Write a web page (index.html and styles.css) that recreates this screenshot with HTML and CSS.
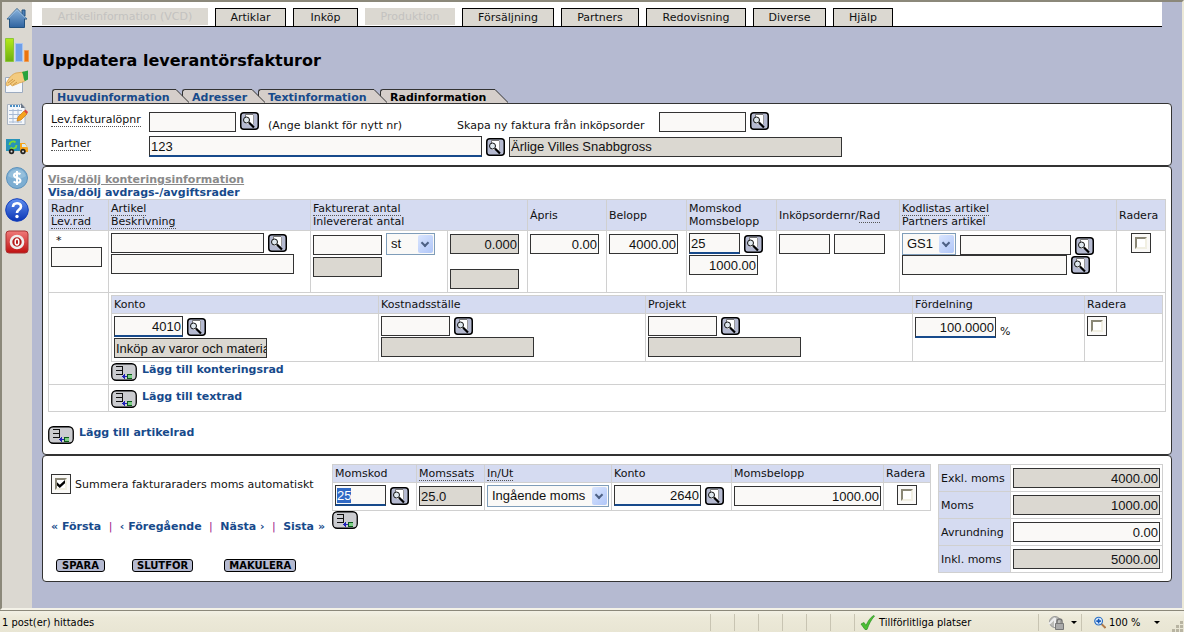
FILE: index.html
```html
<!DOCTYPE html>
<html lang="sv">
<head>
<meta charset="utf-8">
<title>Uppdatera leverantörsfakturor</title>
<link rel="stylesheet" href="styles.css">
</head>
<body>
<svg class="defs" aria-hidden="true">
  <defs>
    <linearGradient id="gBlue" x1="0" y1="0" x2="0" y2="1"><stop offset="0" stop-color="#8ab4dd"/><stop offset="1" stop-color="#2f639f"/></linearGradient>
    <linearGradient id="gGreen" x1="0" y1="0" x2="0" y2="1"><stop offset="0" stop-color="#b4ea1c"/><stop offset="1" stop-color="#6fae10"/></linearGradient>
    <linearGradient id="gHelp" x1="0" y1="0" x2="0" y2="1"><stop offset="0" stop-color="#5f8ff0"/><stop offset="1" stop-color="#0b35b4"/></linearGradient>
    <linearGradient id="gRed" x1="0" y1="0" x2="0" y2="1"><stop offset="0" stop-color="#ef7a7a"/><stop offset="1" stop-color="#c01010"/></linearGradient>
    <symbol id="search" viewBox="0 0 19 18">
      <rect x=".75" y=".75" width="17.5" height="16.5" rx="3" fill="#b5bad1" stroke="#000" stroke-width="1.5"/>
      <path d="M6 3h7v9H6z" fill="#fff"/><path d="M5.500 5V2.500H13" fill="none" stroke="#777"/><path d="M13.500 3v9" stroke="#999"/>
      <circle cx="6.500" cy="8" r="3" fill="#dfe8ee" stroke="#111"/>
      <path d="M9 10.500l5 5" stroke="#000" stroke-width="2.200"/>
    </symbol>
    <symbol id="add" viewBox="0 0 26 18">
      <rect x=".75" y=".75" width="24.500" height="16.500" rx="4.500" fill="#cbccd0" stroke="#000" stroke-width="1.300"/>
      <path d="M5 3h7v9H5v-1h6V8H5V7h6V4H5z" fill="#111"/>
      <path d="M12 13h4v1h-4zM11 13h1v1h-1zM12 12h1v3h-1zM13 11h1v5h-1z" fill="#2020b8"/>
      <path d="M17 12h4v3h-4z" fill="#7fd088"/><path d="M16 11h5v1h-4v3h4v1h-5z" fill="#0c5a18"/>
    </symbol>
    <symbol id="slant" viewBox="0 0 15 14"><path d="M0 .5h2L15 13.500V14H0z" fill="#d5ceca"/><path d="M0 .5h2L15.500 14" fill="none" stroke="#333"/></symbol>
  </defs>
</svg>

<div class="window">
  <nav class="sidebar" aria-label="Genvägar">
    <a href="#" aria-label="Hem"><svg viewBox="0 0 24 24"><path d="M17 4h3v6h-3z" fill="#4d7fb8" stroke="#23527f"/><path d="M2 13L12 2.500 22 13h-2.500v8.500h-15V13z" fill="url(#gBlue)" stroke="#23527f"/><path d="M3 12.500L12 3.500l9 9" fill="none" stroke="#a9c9e8"/></svg></a>
    <a href="#" aria-label="Statistik"><svg viewBox="0 0 24 24"><path d="M.5.500h8v23h-8z" fill="url(#gGreen)" stroke="#8cc63a"/><path d="M10.500 5.500h7v18h-7z" fill="#6f9fe8" stroke="#a8c5f2"/><path d="M19.500 12.500h4v11h-4z" fill="#ea7410" stroke="#f09a50"/></svg></a>
    <a href="#" aria-label="Avtal"><svg viewBox="0 0 24 24"><path d="M.5 7.500h17v15H.5z" fill="#f5f8fc" stroke="#9cabc0"/><path d="M1 14c2-5 6-10 10-11l8-1 2 8c-3 3-6 2-9 4l-5 2-1-2-4 2z" fill="#f3cb80" stroke="#d9a24a" stroke-width=".8"/><path d="M3 13l5-4M5 14l5-4M8 15l4-3" stroke="#c48b3a" stroke-width=".8"/><path d="M17 2l6-1.500v9L20 11c-2-2-1-5-3-9z" fill="#27a33c"/></svg></a>
    <a href="#" aria-label="Formulär"><svg viewBox="0 0 24 24"><path d="M2.500 2.500H17l3 3v17H2.500z" fill="#f4f7fb" stroke="#a9b3c0"/><path d="M16 1l4 5h-4z" fill="#6c7888"/><path d="M5 4h10" stroke="#4b8ec2" stroke-width="2" stroke-dasharray="2 1"/><path d="M4 8.500h13M4 12.500h13M4 16.500h13M4 20h13M8 7v14M13 7v14" stroke="#a7bad4"/><path d="M12 19l1-4 6-6 3 3-6 6z" fill="#f5a21e" stroke="#c87a12" stroke-width=".7"/><path d="M19 9l1.500-1.500 2.500 2.500-1 2z" fill="#e0473d"/></svg></a>
    <a href="#" aria-label="Leverans"><svg viewBox="0 0 24 24"><path d="M1 5h14v12H1z" fill="#2793b8"/><path d="M15 9h5l3 5v4h-8z" fill="#f6a51d"/><path d="M17 10h3l2 3h-5z" fill="#d5eaf5"/><path d="M4.500 11a3.500 3.500 0 0 1 6-2.500M11.500 11a3.500 3.500 0 0 1-6 2.500" fill="none" stroke="#7ddb34" stroke-width="1.800"/><circle cx="6.500" cy="17.500" r="2.700" fill="#222"/><circle cx="6.500" cy="17.500" r="1" fill="#ddd"/><circle cx="18" cy="17.500" r="2.700" fill="#222"/><circle cx="18" cy="17.500" r="1" fill="#ddd"/></svg></a>
    <a href="#" aria-label="Valuta"><svg viewBox="0 0 24 24"><circle cx="12" cy="12" r="10.500" fill="#7daed2" stroke="#5d93bd"/><path d="M3 10a9.500 9.500 0 0 1 18 0c-4 3-12 4-18 0z" fill="#a5c9e2" opacity=".6"/><path d="M15.500 8.200C13 6.500 9 7 9 9.500c0 3.200 6.500 1.500 6.500 5 0 2.500-4.500 3-7 1M12 5v14" fill="none" stroke="#fff" stroke-width="2"/></svg></a>
    <a href="#" aria-label="Hjälp"><svg viewBox="0 0 24 24"><circle cx="12" cy="12" r="11.300" fill="url(#gHelp)" stroke="#143fbb"/><path d="M8 9c0-5 8-5 8-.5 0 3-4 3-4 6.500" fill="none" stroke="#fff" stroke-width="2.600"/><circle cx="12" cy="18.500" r="1.700" fill="#fff"/></svg></a>
    <a href="#" aria-label="Avsluta"><svg viewBox="0 0 24 24"><rect x="1" y="1" width="22" height="22" rx="3" fill="url(#gRed)" stroke="#a83434"/><circle cx="12" cy="12" r="6" fill="#b51a1a" stroke="#eee" stroke-width="2.600"/><ellipse cx="12" cy="12" rx="1.800" ry="3" fill="none" stroke="#fff" stroke-width="1.500"/></svg></a>
  </nav>

  <main class="main">
    <nav class="menu" aria-label="Huvudmeny">
      <button class="menu-btn w-info" disabled>Artikelinformation (VCD)</button>
      <button class="menu-btn w-art">Artiklar</button>
      <button class="menu-btn w-ink">Inköp</button>
      <button class="menu-btn w-prod" disabled>Produktion</button>
      <button class="menu-btn w-fors">Försäljning</button>
      <button class="menu-btn w-part">Partners</button>
      <button class="menu-btn w-redo">Redovisning</button>
      <button class="menu-btn w-div">Diverse</button>
      <button class="menu-btn w-help">Hjälp</button>
    </nav>

    <div class="content">
      <h1>Uppdatera leverantörsfakturor</h1>
      <div class="tabs">
        <a class="tab t1" href="#">Huvudinformation<svg><use href="#slant"/></svg></a>
        <a class="tab t2" href="#">Adresser<svg><use href="#slant"/></svg></a>
        <a class="tab t3" href="#">Textinformation<svg><use href="#slant"/></svg></a>
        <a class="tab t4 current" href="#">Radinformation<svg><use href="#slant"/></svg></a>
      </div>

      <section class="panel head">
        <label class="lead" for="lopnr"><span class="tip">Lev.fakturalöpnr</span></label>
        <div class="line">
          <input class="field w87" id="lopnr" type="text">
          <button class="icon" aria-label="Sök faktura"><svg><use href="#search"/></svg></button>
          <span class="hint">(Ange blankt för nytt nr)</span>
          <label class="order" for="order">Skapa ny faktura från inköpsorder</label>
          <input class="field w87" id="order" type="text">
          <button class="icon" aria-label="Sök inköpsorder"><svg><use href="#search"/></svg></button>
        </div>
        <label class="lead" for="partner"><span class="tip">Partner</span></label>
        <div class="line mid">
          <input class="field req w333" id="partner" type="text" value="123">
          <button class="icon" aria-label="Sök partner"><svg><use href="#search"/></svg></button>
          <input class="field ro w333" aria-label="Partnernamn" readonly value="Ärlige Villes Snabbgross">
        </div>
      </section>

      <section class="panel rows">
        <a class="toggle off" href="#">Visa/dölj konteringsinformation</a>
        <a class="toggle" href="#">Visa/dölj avdrags-/avgiftsrader</a>
        <table class="grid items">
          <colgroup><col class="c-60"><col><col class="c-137"><col class="c-80"><col class="c-79"><col class="c-80"><col class="c-90"><col class="c-123"><col class="c-217"><col class="c-49"></colgroup>
          <thead><tr>
            <th><span class="tip">Radnr</span><br><span class="tip">Lev.rad</span></th>
            <th><span class="tip">Artikel</span><br><span class="tip">Beskrivning</span></th>
            <th colspan="2"><span class="tip">Fakturerat antal</span><br>Inlevererat antal</th>
            <th>Ápris</th><th>Belopp</th><th>Momskod<br>Momsbelopp</th>
            <th>Inköpsordernr/<span class="tip">Rad</span></th>
            <th><span class="tip">Kodlistas artikel</span><br>Partners artikel</th>
            <th>Radera</th>
          </tr></thead>
          <tbody>
          <tr class="item">
            <td><div class="star">*</div><input class="field w51" aria-label="Lev.rad"></td>
            <td><div class="stack">
              <div class="line mid"><input class="field w153" aria-label="Artikel"><button class="icon" aria-label="Sök artikel"><svg><use href="#search"/></svg></button></div>
              <input class="field w183" aria-label="Beskrivning"></div></td>
            <td><div class="stack gap2">
              <div class="line end"><input class="field w69" aria-label="Fakturerat antal"><span class="pick"><select class="s49" aria-label="Enhet"><option>st</option></select></span></div>
              <input class="field ro w69" aria-label="Inlevererat antal" readonly></div></td>
            <td class="low"><div class="stack gap15"><input class="field ro num w69" aria-label="Antal" readonly value="0.000"><input class="field ro w69" aria-label="Antal levererat" readonly></div></td>
            <td class="low"><input class="field num w69" aria-label="Ápris" value="0.00"></td>
            <td class="low"><input class="field num w69" aria-label="Belopp" value="4000.00"></td>
            <td><div class="stack">
              <div class="line mid"><input class="field req w51" aria-label="Momskod" value="25"><button class="icon" aria-label="Sök momskod"><svg><use href="#search"/></svg></button></div>
              <input class="field num w69" aria-label="Momsbelopp" value="1000.00"></div></td>
            <td class="low"><div class="line"><input class="field w51" aria-label="Inköpsordernr"><input class="field w51" aria-label="Rad"></div></td>
            <td><div class="stack flush">
              <div class="line end"><span class="pick"><select class="s54" aria-label="Kodlista"><option>GS1</option></select></span><input class="field w111" aria-label="Kodlistas artikel"><button class="icon" aria-label="Sök kod"><svg><use href="#search"/></svg></button></div>
              <div class="line mid"><input class="field w165" aria-label="Partners artikel"><button class="icon" aria-label="Sök partnerartikel"><svg><use href="#search"/></svg></button></div></div></td>
            <td class="center"><input class="check" type="checkbox" aria-label="Radera rad"></td>
          </tr>
          <tr>
            <td></td>
            <td colspan="9">
              <table class="grid accounts">
                <colgroup><col><col class="c-267"><col class="c-267"><col class="c-172"><col class="c-78"></colgroup>
                <thead><tr><th>Konto</th><th>Kostnadsställe</th><th>Projekt</th><th>Fördelning</th><th>Radera</th></tr></thead>
                <tbody><tr>
                  <td><div class="stack"><div class="line mid"><input class="field req num w69" aria-label="Konto" value="4010"><button class="icon" aria-label="Sök konto"><svg><use href="#search"/></svg></button></div><input class="field ro w153" aria-label="Kontonamn" readonly value="Inköp av varor och materia"></div></td>
                  <td><div class="stack"><div class="line mid"><input class="field w69" aria-label="Kostnadsställe"><button class="icon" aria-label="Sök kostnadsställe"><svg><use href="#search"/></svg></button></div><input class="field ro w153" aria-label="Kostnadsställets namn" readonly></div></td>
                  <td><div class="stack"><div class="line mid"><input class="field w69" aria-label="Projekt"><button class="icon" aria-label="Sök projekt"><svg><use href="#search"/></svg></button></div><input class="field ro w153" aria-label="Projektnamn" readonly></div></td>
                  <td class="low"><div class="line end"><input class="field req num w81" aria-label="Fördelning" value="100.0000"><span>%</span></div></td>
                  <td><input class="check" type="checkbox" aria-label="Radera kontering"></td>
                </tr></tbody>
              </table>
              <button class="add"><svg><use href="#add"/></svg>Lägg till konteringsrad</button>
            </td>
          </tr>
          <tr>
            <td></td>
            <td colspan="9" class="textrow"><button class="add"><svg><use href="#add"/></svg>Lägg till textrad</button></td>
          </tr>
          </tbody>
        </table>
        <button class="add article"><svg><use href="#add"/></svg>Lägg till artikelrad</button>
      </section>

      <section class="panel foot">
        <div class="actions">
          <label class="sum"><input class="check" type="checkbox" checked><span>Summera fakturaraders moms automatiskt</span></label>
          <div class="pager"><a href="#">« Första</a> | <a href="#">‹ Föregående</a> | <a href="#">Nästa ›</a> | <a href="#">Sista »</a></div>
          <div class="buttons"><button class="cmd">SPARA</button><button class="cmd">SLUTFÖR</button><button class="cmd last">MAKULERA</button></div>
        </div>
        <div class="tax">
          <table class="grid vat">
            <colgroup><col class="c-84"><col class="c-68"><col class="c-127"><col class="c-120"><col class="c-152"><col class="c-47"></colgroup>
            <thead><tr><th>Momskod</th><th><span class="tip">Momssats</span></th><th><span class="tip">In/Ut</span></th><th>Konto</th><th>Momsbelopp</th><th>Radera</th></tr></thead>
            <tbody><tr>
              <td><div class="line mid"><input class="field req w51" id="vatcode" aria-label="Momskod" value="25"><button class="icon" aria-label="Sök momskod"><svg><use href="#search"/></svg></button></div></td>
              <td class="low"><input class="field ro w63" aria-label="Momssats" readonly value="25.0"></td>
              <td><span class="pick"><select class="s122" aria-label="In/Ut"><option>Ingående moms</option></select></span></td>
              <td><div class="line mid"><input class="field req num w87" aria-label="Konto" value="2640"><button class="icon" aria-label="Sök konto"><svg><use href="#search"/></svg></button></div></td>
              <td class="low"><input class="field num w147" aria-label="Momsbelopp" value="1000.00"></td>
              <td class="center"><input class="check" type="checkbox" aria-label="Radera moms"></td>
            </tr></tbody>
          </table>
          <button class="add" aria-label="Lägg till momsrad"><svg><use href="#add"/></svg></button>
        </div>
        <table class="grid totals">
          <tbody>
          <tr><th><label for="t1">Exkl. moms</label></th><td><input class="field ro num" id="t1" readonly value="4000.00"></td></tr>
          <tr><th><label for="t2">Moms</label></th><td><input class="field ro num" id="t2" readonly value="1000.00"></td></tr>
          <tr><th><label for="t3">Avrundning</label></th><td><input class="field num" id="t3" value="0.00"></td></tr>
          <tr><th><label for="t4">Inkl. moms</label></th><td><input class="field ro num" id="t4" readonly value="5000.00"></td></tr>
          </tbody>
        </table>
      </section>
    </div>
  </main>
</div>

<footer class="status">
  <span class="msg">1 post(er) hittades</span>
  <i></i><i></i><i></i><i></i><i></i><i></i>
  <span class="zone"><svg viewBox="0 0 15 15"><path d="M1 9l3-1.500 2 3C8 6 10 3 13.500.500L14.500 1C11 5 9 9 7 14.500H5z" fill="#4cc034" stroke="#2c8f24" stroke-width=".7"/></svg>Tillförlitliga platser</span>
  <span class="lock"><svg viewBox="0 0 17 15"><circle cx="7" cy="7" r="5.500" fill="#bcbcb8" stroke="#999"/><path d="M1 9l6-6M7 3v9" stroke="#eee" stroke-width="2"/><path d="M9 8V6.500a2.500 2.500 0 0 1 5 0V8" fill="none" stroke="#777" stroke-width="1.500"/><path d="M7.500 8.500h8v6h-8z" fill="#aaa" stroke="#777"/></svg><b class="caret"></b></span>
  <span class="zoom"><svg viewBox="0 0 13 13"><path d="M8 8l4.500 4.500" stroke="#b07a4a" stroke-width="2.200"/><circle cx="5" cy="5" r="4.200" fill="#e4f1fd" stroke="#2b6fc4" stroke-width="1.300"/><path d="M2.500 5h5M5 2.500v5" stroke="#1558b8" stroke-width="1.700"/></svg>100 %<b class="caret"></b></span>
  <svg class="grip" viewBox="0 0 12 12"><path d="M8 0h3v3H8zM8 4h3v3H8zM8 8h3v3H8zM4 4h3v3H4zM4 8h3v3H4zM0 8h3v3H0z" fill="#b8b4a2"/></svg>
</footer>
<script src="app.js"></script>
</body>
</html>
```
FILE: app.js
```js
const code = document.getElementById('vatcode');
code.focus();
code.select();
```
FILE: styles.css
```css
* { box-sizing: border-box; }
body {
  margin: 0;
  min-height: 100vh;
  display: flex;
  flex-direction: column;
  background: #b5bad1;
  color: #111;
  font: 11px/13px "DejaVu Sans", Verdana, sans-serif;
}
a { color: #174a8b; text-decoration: none; }
button, input, select { font: inherit; color: inherit; margin: 0; }
button { padding: 0; border: 0; background: none; cursor: pointer; }
::selection { background: #316ac5; color: #fff; }
.defs { position: absolute; width: 0; height: 0; }

.window {
  flex: 1;
  display: flex;
  border-style: solid;
  border-width: 2px;
  border-color: #8b887a #ece9d8 #f4f2e8 #8b887a;
}
.sidebar {
  width: 30px;
  flex: none;
  display: flex;
  flex-direction: column;
  align-items: center;
  gap: 8px;
  padding-top: 4px;
  background: #dbd8d1;
}
.sidebar a, .sidebar svg { display: block; width: 24px; height: 24px; }
.main { flex: 1; min-width: 0; }

.menu {
  display: flex;
  align-items: flex-end;
  gap: 7px;
  height: 25px;
  margin-right: 20px;
  padding-left: 10px;
  background: #fff;
  border-bottom: 1px solid #000;
}
.menu-btn {
  height: 18px;
  background: #dbd8d1;
  border: 1px solid #000;
  border-bottom: 0;
  white-space: nowrap;
}
.menu-btn:disabled { height: 17px; margin-bottom: 1px; border: 0; color: #c3c2c0; }
.w-info { width: 166px; }
.w-art { width: 71px; }
.w-ink { width: 65px; }
.w-prod { width: 90px; }
.w-fors { width: 92px; }
.w-part { width: 78px; }
.w-redo { width: 100px; }
.w-div { width: 73px; }
.w-help { width: 60px; }

.content { padding: 24px 10px 26px; }
h1 { margin: 0 0 18px; font-size: 16px; line-height: 20px; color: #000; }

.tabs { display: flex; padding-left: 10px; }
.tab {
  position: relative;
  height: 14px;
  margin-right: 8px;
  padding-left: 9px;
  background: #d5ceca;
  border-top: 1px solid #333;
  border-left: 1px solid #333;
  border-radius: 3px 0 0 0;
  font-weight: bold;
  line-height: 15px;
}
.tab svg { position: absolute; top: -1px; left: 100%; width: 15px; height: 14px; }
.t1 { z-index: 4; min-width: 122px; padding-left: 4px; }
.t2 { z-index: 3; min-width: 68px; }
.t3 { z-index: 2; min-width: 114px; }
.t4 { z-index: 1; min-width: 113px; }
.current { color: #000; }

.panel { background: #fff; border: 1px solid #333; border-radius: 4px; }
.tip { border-bottom: 1px dotted #555; }
.line { display: flex; align-items: flex-start; gap: 4px; }
.mid { align-items: center; }
.end { align-items: flex-end; }
.stack { display: flex; flex-direction: column; align-items: flex-start; gap: 1px; }
.gap2 { gap: 2px; }
.gap15 { gap: 15px; }
.flush { gap: 0; }

.field {
  display: block;
  height: 20px;
  min-width: 0;
  padding: 0 0 0 1px;
  border: 1px solid #333;
  border-radius: 0;
  outline: 0;
  background: #faf9f7;
  font: 13px/16px "Liberation Sans", Arial, sans-serif;
}
.req { height: 21px; border-bottom: 2px solid #174a8b; }
.ro { background: #dbd8d1; }
.num { text-align: right; padding-right: 1px; }
.w51 { width: 51px; }
.w63 { width: 63px; }
.w69 { width: 69px; }
.w81 { width: 81px; }
.w87 { width: 87px; }
.w111 { width: 111px; }
.w147 { width: 147px; }
.w153 { width: 153px; }
.w165 { width: 165px; }
.w183 { width: 183px; }
.w333 { width: 333px; }

.icon, .icon svg { display: block; width: 19px; height: 18px; flex: none; }

.pick { position: relative; display: block; flex: none; }
.pick select {
  display: block;
  appearance: none;
  height: 22px;
  padding: 0 4px;
  border: 1px solid #7f9db9;
  border-radius: 0;
  background: #faf9f7;
  font: 13px/16px "Liberation Sans", Arial, sans-serif;
}
.pick::before {
  content: "";
  position: absolute;
  z-index: 1;
  top: 2px;
  right: 2px;
  width: 15px;
  height: 18px;
  border-radius: 2px;
  background: linear-gradient(135deg, #d9e5fe, #b0c6f8);
  pointer-events: none;
}
.pick::after {
  content: "";
  position: absolute;
  z-index: 2;
  top: 7px;
  right: 7px;
  width: 4px;
  height: 4px;
  border: solid #4d6185;
  border-width: 0 2px 2px 0;
  transform: rotate(45deg);
  pointer-events: none;
}
.pick .s49 { width: 49px; }
.pick .s54 { width: 54px; }
.pick .s122 { width: 122px; }

.check {
  display: grid;
  place-items: center;
  appearance: none;
  flex: none;
  width: 20px;
  height: 20px;
  border: 1px solid #333;
  background: #faf9f7;
}
.check::before {
  content: "";
  box-sizing: border-box;
  grid-area: 1 / 1;
  width: 12px;
  height: 12px;
  border: 2px solid #f1efe2;
  border-top-color: #8a8776;
  border-left-color: #8a8776;
  background: #fff;
}
.check:checked::after {
  content: "";
  grid-area: 1 / 1;
  width: 8px;
  height: 8px;
  background: #000;
  clip-path: polygon(0 29%, 35% 60%, 100% 0, 100% 40%, 35% 100%, 0 70%);
}
.center .check { margin: 0 auto; }

.head {
  display: grid;
  grid-template-columns: 98px 1fr;
  row-gap: 4px;
  padding: 8px;
}
.lead { padding-top: 1px; }
.hint { align-self: flex-end; width: 190px; padding-left: 5px; }
.order { align-self: flex-end; width: 198px; }

.rows { padding: 6px 5px 10px; }
.toggle { display: block; font-weight: bold; }
.off { color: #8a8a8a; text-decoration: underline; }

.grid { border-collapse: collapse; table-layout: fixed; }
.grid th, .grid td { border: 1px solid #d0d0d0; padding: 2px 2px 3px; text-align: left; vertical-align: top; }
.grid th { padding: 2px; background: #d5dbf1; font-weight: normal; vertical-align: middle; }
.grid .low { padding-top: 3px; }
.c-47 { width: 47px; }
.c-49 { width: 49px; }
.c-60 { width: 60px; }
.c-68 { width: 68px; }
.c-78 { width: 78px; }
.c-79 { width: 79px; }
.c-80 { width: 80px; }
.c-84 { width: 84px; }
.c-90 { width: 90px; }
.c-120 { width: 120px; }
.c-123 { width: 123px; }
.c-127 { width: 127px; }
.c-137 { width: 137px; }
.c-152 { width: 152px; }
.c-172 { width: 172px; }
.c-217 { width: 217px; }
.c-267 { width: 267px; }

.items { width: 100%; }
.items thead th { height: 31px; }
.item { height: 62px; }
.star { padding: 1px 0 0 5px; }
.accounts { width: 100%; margin-bottom: 1px; }
.items .accounts th { height: 18px; }
.items .textrow { padding-top: 5px; }

.add {
  display: flex;
  align-items: flex-start;
  gap: 5px;
  color: #174a8b;
  font-weight: bold;
  text-align: left;
}
.add svg { width: 26px; height: 18px; }
.article { margin-top: 14px; }

.foot { display: flex; align-items: flex-start; padding: 8px; }
.actions { width: 281px; flex: none; padding-top: 10px; white-space: nowrap; }
.sum { display: flex; align-items: center; gap: 4px; }
.pager { display: flex; justify-content: space-between; width: 274px; margin-top: 26px; color: #a0208a; }
.pager a { font-weight: bold; }
.buttons { display: flex; gap: 27px; margin: 26px 0 0 5px; }
.cmd {
  height: 13px;
  min-width: 49px;
  padding: 0 4px;
  border: 1px solid #000;
  border-radius: 3px;
  background: #b5bad1;
  color: #000;
  font-size: 10px;
  line-height: 11px;
  font-weight: bold;
}
.last { margin-left: 4px; }
.vat { width: 598px; }
.vat thead th { height: 18px; }
.totals { width: 225px; margin-left: auto; }
.totals th { width: 72px; white-space: nowrap; }
.totals td { padding-top: 3px; }
.totals .field { width: 100%; }
.grid.totals td { padding: 3px 2px; }

.status {
  height: 23px;
  display: flex;
  align-items: center;
  border-top: 1px solid #8b887a;
  background: linear-gradient(#f2f0e4, #ece9d8 30%, #e8e5d3);
  color: #000;
  font-family: "DejaVu Sans Condensed", "DejaVu Sans", Tahoma, sans-serif;
}
.msg { flex: 1; padding-left: 2px; }
.status i { width: 24px; height: 17px; border-left: 1px solid #c8c4b2; }
.zone, .lock, .zoom { height: 17px; display: flex; align-items: center; border-left: 1px solid #c8c4b2; }
.zone { width: 184px; padding-left: 5px; gap: 4px; }
.zone svg { width: 15px; height: 15px; }
.lock { width: 43px; padding-left: 9px; gap: 6px; }
.lock svg { width: 17px; height: 15px; }
.zoom { width: 91px; padding-left: 12px; gap: 3px; }
.zoom svg { width: 12px; height: 13px; }
.caret { border: 3px solid transparent; border-top-color: #000; border-bottom: 0; }
.zoom .caret { margin: 0 12px 0 auto; }
.grip { width: 12px; height: 12px; align-self: flex-end; }
```
